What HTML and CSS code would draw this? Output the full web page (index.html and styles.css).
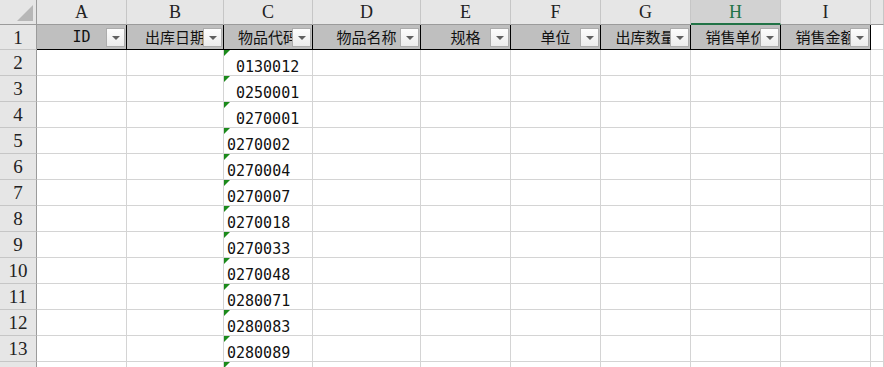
FILE: index.html
```html
<!DOCTYPE html>
<html lang="zh-CN">
<head>
    <meta charset="UTF-8">
    <title>出库明细</title>
    <link rel="stylesheet" href="styles.css">
</head>
<body>
    <div class="sheet">
        <div class="row colheads">
            <div class="corner"><i class="corner-mark"></i></div>
            <div class="colhead">A</div>
            <div class="colhead">B</div>
            <div class="colhead">C</div>
            <div class="colhead">D</div>
            <div class="colhead">E</div>
            <div class="colhead">F</div>
            <div class="colhead">G</div>
            <div class="colhead active">H</div>
            <div class="colhead">I</div>
            <div class="colhead"></div>
        </div>

        <div class="row titles">
            <div class="rowhead">1</div>
            <div class="cell title"><span class="latin">ID</span><i class="filter"></i></div>
            <div class="cell title"><span>出库日期</span><i class="filter"></i></div>
            <div class="cell title"><span>物品代码</span><i class="filter"></i></div>
            <div class="cell title"><span>物品名称</span><i class="filter"></i></div>
            <div class="cell title"><span>规格</span><i class="filter"></i></div>
            <div class="cell title"><span>单位</span><i class="filter"></i></div>
            <div class="cell title"><span>出库数量</span><i class="filter"></i></div>
            <div class="cell title"><span>销售单价</span><i class="filter"></i></div>
            <div class="cell title"><span>销售金额</span><i class="filter"></i></div>
            <div class="cell"></div>
        </div>

        <div class="row">
            <div class="rowhead">2</div>
            <div class="cell"></div><div class="cell"></div>
            <div class="cell code"><span class="indent">0130012</span></div>
            <div class="cell"></div><div class="cell"></div><div class="cell"></div><div class="cell"></div><div class="cell"></div><div class="cell"></div><div class="cell"></div>
        </div>
        <div class="row">
            <div class="rowhead">3</div>
            <div class="cell"></div><div class="cell"></div>
            <div class="cell code"><span class="indent">0250001</span></div>
            <div class="cell"></div><div class="cell"></div><div class="cell"></div><div class="cell"></div><div class="cell"></div><div class="cell"></div><div class="cell"></div>
        </div>
        <div class="row">
            <div class="rowhead">4</div>
            <div class="cell"></div><div class="cell"></div>
            <div class="cell code"><span class="indent">0270001</span></div>
            <div class="cell"></div><div class="cell"></div><div class="cell"></div><div class="cell"></div><div class="cell"></div><div class="cell"></div><div class="cell"></div>
        </div>
        <div class="row">
            <div class="rowhead">5</div>
            <div class="cell"></div><div class="cell"></div>
            <div class="cell code"><span>0270002</span></div>
            <div class="cell"></div><div class="cell"></div><div class="cell"></div><div class="cell"></div><div class="cell"></div><div class="cell"></div><div class="cell"></div>
        </div>
        <div class="row">
            <div class="rowhead">6</div>
            <div class="cell"></div><div class="cell"></div>
            <div class="cell code"><span>0270004</span></div>
            <div class="cell"></div><div class="cell"></div><div class="cell"></div><div class="cell"></div><div class="cell"></div><div class="cell"></div><div class="cell"></div>
        </div>
        <div class="row">
            <div class="rowhead">7</div>
            <div class="cell"></div><div class="cell"></div>
            <div class="cell code"><span>0270007</span></div>
            <div class="cell"></div><div class="cell"></div><div class="cell"></div><div class="cell"></div><div class="cell"></div><div class="cell"></div><div class="cell"></div>
        </div>
        <div class="row">
            <div class="rowhead">8</div>
            <div class="cell"></div><div class="cell"></div>
            <div class="cell code"><span>0270018</span></div>
            <div class="cell"></div><div class="cell"></div><div class="cell"></div><div class="cell"></div><div class="cell"></div><div class="cell"></div><div class="cell"></div>
        </div>
        <div class="row">
            <div class="rowhead">9</div>
            <div class="cell"></div><div class="cell"></div>
            <div class="cell code"><span>0270033</span></div>
            <div class="cell"></div><div class="cell"></div><div class="cell"></div><div class="cell"></div><div class="cell"></div><div class="cell"></div><div class="cell"></div>
        </div>
        <div class="row">
            <div class="rowhead">10</div>
            <div class="cell"></div><div class="cell"></div>
            <div class="cell code"><span>0270048</span></div>
            <div class="cell"></div><div class="cell"></div><div class="cell"></div><div class="cell"></div><div class="cell"></div><div class="cell"></div><div class="cell"></div>
        </div>
        <div class="row">
            <div class="rowhead">11</div>
            <div class="cell"></div><div class="cell"></div>
            <div class="cell code"><span>0280071</span></div>
            <div class="cell"></div><div class="cell"></div><div class="cell"></div><div class="cell"></div><div class="cell"></div><div class="cell"></div><div class="cell"></div>
        </div>
        <div class="row">
            <div class="rowhead">12</div>
            <div class="cell"></div><div class="cell"></div>
            <div class="cell code"><span>0280083</span></div>
            <div class="cell"></div><div class="cell"></div><div class="cell"></div><div class="cell"></div><div class="cell"></div><div class="cell"></div><div class="cell"></div>
        </div>
        <div class="row">
            <div class="rowhead">13</div>
            <div class="cell"></div><div class="cell"></div>
            <div class="cell code"><span>0280089</span></div>
            <div class="cell"></div><div class="cell"></div><div class="cell"></div><div class="cell"></div><div class="cell"></div><div class="cell"></div><div class="cell"></div>
        </div>
        <div class="row">
            <div class="rowhead"></div>
            <div class="cell"></div><div class="cell"></div>
            <div class="cell code"></div>
            <div class="cell"></div><div class="cell"></div><div class="cell"></div><div class="cell"></div><div class="cell"></div><div class="cell"></div><div class="cell"></div>
        </div>
    </div>
</body>
</html>
```

FILE: styles.css
```css
html, body { margin: 0; padding: 0; background: #fff; overflow: hidden; }
body { width: 884px; height: 367px; }

.sheet { width: 884px; height: 367px; overflow: hidden; }

.row { display: grid; grid-template-columns: 37px 90px 97px 89px 108px 90px 90px 90px 90px 90px 1fr; height: 26px; }
.row > div { box-sizing: border-box; position: relative; overflow: hidden; white-space: nowrap; }

.colheads { height: 25px; }
.corner { background: #e6e6e6; border-right: 1px solid #9b9b9b; border-bottom: 1px solid #9b9b9b; }
.corner-mark { position: absolute; right: 3px; bottom: 3px; width: 0; height: 0; border-left: 16px solid transparent; border-bottom: 16px solid #b7b7b7; }
.colhead { background: #e6e6e6; border-right: 1px solid #c6c6c6; border-bottom: 1px solid #9b9b9b; font: 18px/24px "Liberation Serif", serif; color: #222; text-align: center; }
.colhead.active { background: #d2d2d2; color: #217346; border-bottom: 2px solid #217346; }

.rowhead { background: #e6e6e6; border-right: 1px solid #9b9b9b; border-bottom: 1px solid #c6c6c6; font: 19px/26px "Liberation Serif", serif; color: #222; text-align: center; }

.cell { border-right: 1px solid #d4d4d4; border-bottom: 1px solid #d4d4d4; }

.titles { height: 25px; }
.titles .rowhead { line-height: 25px; }
.cell.title { background: #bfbfbf; border-right: 1px solid #000; border-bottom: 1px solid #000; display: flex; align-items: center; justify-content: center; font: 15px "Noto Sans CJK SC", sans-serif; color: #111; }
.cell.title span { display: block; line-height: 18px; }
.cell.title .latin { font: 15px "DejaVu Sans Mono", monospace; }

.filter { position: absolute; right: 1px; top: 3px; width: 19px; height: 19px; box-sizing: border-box; border: 1px solid #adadad; background: linear-gradient(#fdfdfd, #ececec); }
.filter::after { content: ""; position: absolute; left: 5px; top: 7px; border-left: 4px solid transparent; border-right: 4px solid transparent; border-top: 4px solid #5f5f5f; }

.cell.code { font: 15px "DejaVu Sans Mono", monospace; color: #111; padding: 8px 0 0 3px; }
.cell.code::before { content: ""; position: absolute; left: 0; top: 0; border-top: 6px solid #1b8a1b; border-right: 6px solid transparent; }
.cell.code span { display: block; line-height: 18px; }
.cell.code .indent { padding-left: 9px; }
```
